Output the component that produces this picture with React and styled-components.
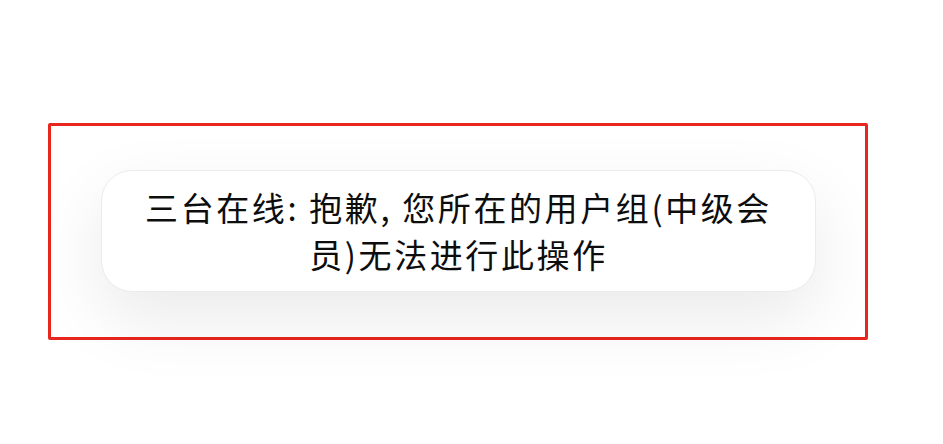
import React from "react";
import styled, { createGlobalStyle } from "styled-components";

const GlobalStyle = createGlobalStyle`
  * { box-sizing: border-box; }
  html, body {
    margin: 0;
    padding: 0;
    background: #ffffff;
    font-family: "Noto Sans CJK SC", "Noto Sans", sans-serif;
  }
`;

const Page = styled.div`
  width: 943px;
  height: 444px;
  padding: 123px 0 0 48px;
  overflow: hidden;
`;

// red highlight frame round the toast
const Frame = styled.div`
  width: 820px;
  height: 217px;
  border: 3px solid #e8261e;
  border-radius: 2px;
  padding: 44px 0 0 50px;
`;

const Toast = styled.div`
  width: 715px;
  height: 122px;
  padding: 13px 30px;
  background: #ffffff;
  border: 1px solid #ebebeb;
  border-radius: 31px;
  box-shadow: 0 26px 70px rgba(0, 0, 0, 0.085);
  color: #0d0d0d;
  font-size: 33px;
  line-height: 47px;
  letter-spacing: 2.6px;
  text-align: center;
`;

const App = () => {
  const message = "三台在线: 抱歉, 您所在的用户组(中级会员)无法进行此操作";

  return (
    <>
      <GlobalStyle />
      <Page>
        <Frame>
          <Toast>{message}</Toast>
        </Frame>
      </Page>
    </>
  );
};

export default App;
